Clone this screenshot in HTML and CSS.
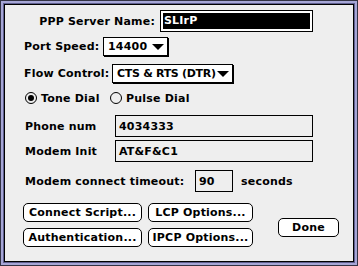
FILE: index.html
```html
<!DOCTYPE html>
<html>
<head>
    <meta charset="utf-8" />
    <title>PPP</title>
    <link rel="stylesheet" href="styles.css">
</head>
<body>
    <div class="dialog">
        <div class="row row-server">
            <span class="label-right">PPP Server Name:</span>
            <div class="field field-server"><span class="selected">SLIrP</span></div>
        </div>
        <div class="row row-speed">
            <span class="label label-speed">Port Speed:</span>
            <div class="popup popup-speed"><span>14400</span><i class="arrow"></i></div>
        </div>
        <div class="row row-flow">
            <span class="label label-flow">Flow Control:</span>
            <div class="popup popup-flow"><span class="tight">CTS &amp; RTS (DTR)</span><i class="arrow"></i></div>
        </div>
        <div class="row row-dial">
            <label class="radio radio-tone"><i class="dot on"></i>Tone Dial</label>
            <label class="radio"><i class="dot"></i>Pulse Dial</label>
        </div>
        <div class="row row-phone">
            <span class="label label-field">Phone num</span>
            <div class="field field-wide">4034333</div>
        </div>
        <div class="row row-init">
            <span class="label label-field">Modem Init</span>
            <div class="field field-wide">AT&amp;F&amp;C1</div>
        </div>
        <div class="row row-timeout">
            <span class="label label-timeout">Modem connect timeout:</span>
            <div class="field field-short">90</div>
            <span class="label label-sec">seconds</span>
        </div>
        <div class="buttons">
            <div class="button-grid">
                <button class="btn">Connect Script...</button>
                <button class="btn">LCP Options...</button>
                <button class="btn">Authentication...</button>
                <button class="btn">IPCP Options...</button>
            </div>
            <button class="btn btn-done">Done</button>
        </div>
    </div>
</body>
</html>
```

FILE: styles.css
```css
body {
    margin: 0;
}

.dialog {
    width: 358px;
    height: 266px;
    box-sizing: border-box;
    padding: 10px 0 0 24px;
    background-color: #eeeeee;
    box-shadow: inset 0 0 0 1px #333344, inset 0 0 0 3px #a6a6d6, inset 0 0 0 4px #5e5e8e, inset 0 0 0 5px #000000;
    font-family: "DejaVu Sans", sans-serif;
    font-weight: bold;
    font-size: 11px;
    letter-spacing: 0.2px;
    color: #000;
}

.row {
    display: flex;
    align-items: center;
    white-space: nowrap;
}

.label {
    flex: none;
}

.label-right {
    width: 131px;
    text-align: right;
    margin-right: 5px;
}

.field {
    flex: none;
    box-sizing: border-box;
    border: 1px solid #000;
    height: 22px;
    padding: 0 3px;
    display: flex;
    align-items: center;
}

.row-server {
    height: 22px;
}

.field-server {
    width: 153px;
    padding: 2px;
    background-color: #fff;
}

.selected {
    display: block;
    width: 100%;
    height: 100%;
    background-color: #000;
    color: #fff;
    line-height: 16px;
    padding-left: 1px;
}

.popup {
    flex: none;
    box-sizing: border-box;
    height: 19px;
    border: 1px solid #000;
    background-color: #fff;
    box-shadow: 1px 1px 0 #000;
    display: flex;
    align-items: center;
    justify-content: space-between;
    padding: 0 3px 0 4px;
}

.tight {
    letter-spacing: -0.3px;
}

.arrow {
    width: 0;
    height: 0;
    border-left: 6px solid transparent;
    border-right: 6px solid transparent;
    border-top: 6px solid #000;
}

.row-speed {
    margin-top: 5px;
    height: 19px;
}

.label-speed {
    width: 79px;
}

.popup-speed {
    width: 65px;
}

.row-flow {
    margin-top: 8px;
    height: 19px;
}

.label-flow {
    width: 88px;
}

.popup-flow {
    width: 121px;
}

.row-dial {
    margin-top: 9px;
    height: 12px;
    padding-left: 1px;
}

.radio {
    display: flex;
    align-items: center;
}

.radio-tone {
    width: 85px;
}

.dot {
    box-sizing: border-box;
    width: 12px;
    height: 12px;
    border: 1px solid #000;
    border-radius: 50%;
    margin-right: 4px;
    display: flex;
    align-items: center;
    justify-content: center;
}

.dot.on::after {
    content: "";
    width: 6px;
    height: 6px;
    border-radius: 50%;
    background-color: #000;
}

.row-phone {
    margin-top: 11px;
    height: 22px;
    padding-left: 1px;
}

.row-init {
    margin-top: 3px;
    height: 22px;
    padding-left: 1px;
}

.label-field {
    width: 90px;
}

.field-wide {
    width: 198px;
}

.row-timeout {
    margin-top: 8px;
    height: 22px;
    padding-left: 1px;
}

.label-timeout {
    width: 170px;
}

.field-short {
    width: 38px;
}

.label-sec {
    margin-left: 8px;
}

.buttons {
    margin-top: 11px;
    display: flex;
    align-items: flex-start;
}

.button-grid {
    display: grid;
    grid-template-columns: 119px 105px;
    column-gap: 6px;
    row-gap: 6px;
    margin-left: -1px;
}

.btn {
    box-sizing: border-box;
    height: 19px;
    border: 1px solid #000;
    border-radius: 5px;
    background-color: #fff;
    font-family: "DejaVu Sans", sans-serif;
    font-weight: bold;
    font-size: 11px;
    letter-spacing: 0.2px;
    color: #000;
    padding: 0;
    white-space: nowrap;
}

.btn-done {
    width: 61px;
    margin-top: 15px;
    margin-left: 25px;
}
```
